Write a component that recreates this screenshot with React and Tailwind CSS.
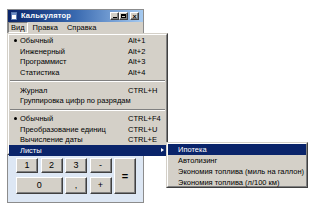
import React from 'react';

const font = { fontFamily: '"Liberation Sans", Arial, sans-serif' };

const raised =
  'border border-t-white border-l-white border-r-[#404040] border-b-[#404040] shadow-[inset_-1px_-1px_0_#808080]';

function MenuItem({ label, shortcut, bullet, active, arrow }) {
  return (
    <div
      className={`relative flex items-center h-[10.5px] pl-[11px] pr-[4px] ${
        active ? 'bg-[#0a246a] text-white' : 'text-black'
      }`}
    >
      {bullet && (
        <span className="absolute left-[5px] top-[3.5px] w-[3px] h-[3px] rounded-full bg-black" />
      )}
      <span className="flex-1 whitespace-nowrap">{label}</span>
      {shortcut && <span className="absolute left-[119px] whitespace-nowrap">{shortcut}</span>}
      {arrow && (
        <span className="absolute right-[2px] top-[2.5px] w-0 h-0 border-y-[2.5px] border-y-transparent border-l-[3px] border-l-white" />
      )}
    </div>
  );
}

function Separator() {
  return (
    <div className="flex items-center h-[7.5px] px-[1px]">
      <div className="w-full border-t border-t-[#808080] border-b border-b-white" />
    </div>
  );
}

function CalcButton({ children, className = '' }) {
  return (
    <div
      className={`flex items-center justify-center bg-[#d4d0c8] text-[9px] text-black ${raised} ${className}`}
    >
      {children}
    </div>
  );
}

export default function App() {
  return (
    <div className="relative w-[320px] h-[218px] bg-white overflow-hidden text-[7.5px] leading-none" style={font}>
      {/* window */}
      <div className="ml-[7px] pt-[9px]">
        <div className="w-[137px] h-[194px] flex flex-col border border-[#8c8c8c] bg-[#d4d0c8]">
          {/* title bar */}
          <div className="flex items-center h-[12px] mx-[0px] bg-gradient-to-r from-[#0a246a] via-[#3a6ab0] to-[#a6caf0] pl-[3px] pr-[4px]">
            <div className="w-[6px] h-[8px] bg-white border border-[#5a7ab0] mr-[4px] flex flex-col">
              <div className="h-[2px] bg-[#6f8fc7]" />
            </div>
            <span className="flex-1 text-white font-bold text-[7.5px] tracking-[0.2px]">Калькулятор</span>
            <div className="flex items-center">
              <div className={`w-[9px] h-[8px] bg-[#d4d0c8] ${raised} flex items-end justify-center pb-[1px]`}>
                <div className="w-[4px] h-[1.5px] bg-black" />
              </div>
              <div className={`w-[9px] h-[8px] bg-[#d4d0c8] ${raised} flex items-center justify-center`}>
                <div className="w-[5px] h-[4px] border border-black border-t-2" />
              </div>
              <div className={`ml-[2px] w-[9px] h-[8px] bg-[#d4d0c8] ${raised} flex items-center justify-center text-[7px] font-bold text-black`}>
                ×
              </div>
            </div>
          </div>
          {/* menu bar */}
          <div className="flex items-center h-[11px] text-black">
            <span className="px-[2px] h-[11px] flex items-center border border-t-[#808080] border-l-[#808080] border-r-white border-b-white">
              Вид
            </span>
            <span className="ml-[4px] px-[1px]">Правка</span>
            <span className="ml-[7px] px-[1px]">Справка</span>
          </div>
          {/* client area */}
          <div className="flex-1 flex flex-col justify-end bg-[#dde7f4] pl-[8px] pb-[8px] border-t border-t-[#a0a0a0]">
            <div className="grid grid-cols-[22px_22px_22px_22px_22px] grid-rows-[15px_17px] gap-x-[2.5px] gap-y-[4px]">
              <CalcButton>1</CalcButton>
              <CalcButton>2</CalcButton>
              <CalcButton>3</CalcButton>
              <CalcButton>-</CalcButton>
              <CalcButton className="row-span-2 text-[11px] font-bold">=</CalcButton>
              <CalcButton className="col-span-2">0</CalcButton>
              <CalcButton>,</CalcButton>
              <CalcButton>+</CalcButton>
            </div>
          </div>
        </div>
      </div>

      {/* dropdown menu */}
      <div
        className="absolute left-[7px] top-[33px] w-[161px] h-[122px] bg-[#d4d0c8] border border-t-[#d4d0c8] border-l-[#d4d0c8] border-r-[#404040] border-b-[#404040]"
      >
        <div className="h-full border border-t-white border-l-white border-r-[#808080] border-b-[#808080] pt-[0.5px]">
          <MenuItem label="Обычный" shortcut="Alt+1" bullet />
          <MenuItem label="Инженерный" shortcut="Alt+2" />
          <MenuItem label="Программист" shortcut="Alt+3" />
          <MenuItem label="Статистика" shortcut="Alt+4" />
          <Separator />
          <MenuItem label="Журнал" shortcut="CTRL+H" />
          <MenuItem label="Группировка цифр по разрядам" />
          <Separator />
          <MenuItem label="Обычный" shortcut="CTRL+F4" bullet />
          <MenuItem label="Преобразование единиц" shortcut="CTRL+U" />
          <MenuItem label="Вычисление даты" shortcut="CTRL+E" />
          <MenuItem label="Листы" active arrow />
        </div>
      </div>

      {/* submenu */}
      <div className="absolute left-[166px] top-[142px] w-[142px] h-[46px] bg-[#d4d0c8] border border-t-[#d4d0c8] border-l-[#d4d0c8] border-r-[#404040] border-b-[#404040]">
        <div className="h-full border border-t-white border-l-white border-r-[#808080] border-b-[#808080]">
          {[
            'Ипотека',
            'Автолизинг',
            'Экономия топлива (миль на галлон)',
            'Экономия топлива (л/100 км)',
          ].map((t, i) => (
            <div
              key={t}
              className={`flex items-center h-[11px] pl-[10px] whitespace-nowrap ${
                i === 0 ? 'bg-[#0a246a] text-white' : 'text-black'
              }`}
            >
              {t}
            </div>
          ))}
        </div>
      </div>
    </div>
  );
}
